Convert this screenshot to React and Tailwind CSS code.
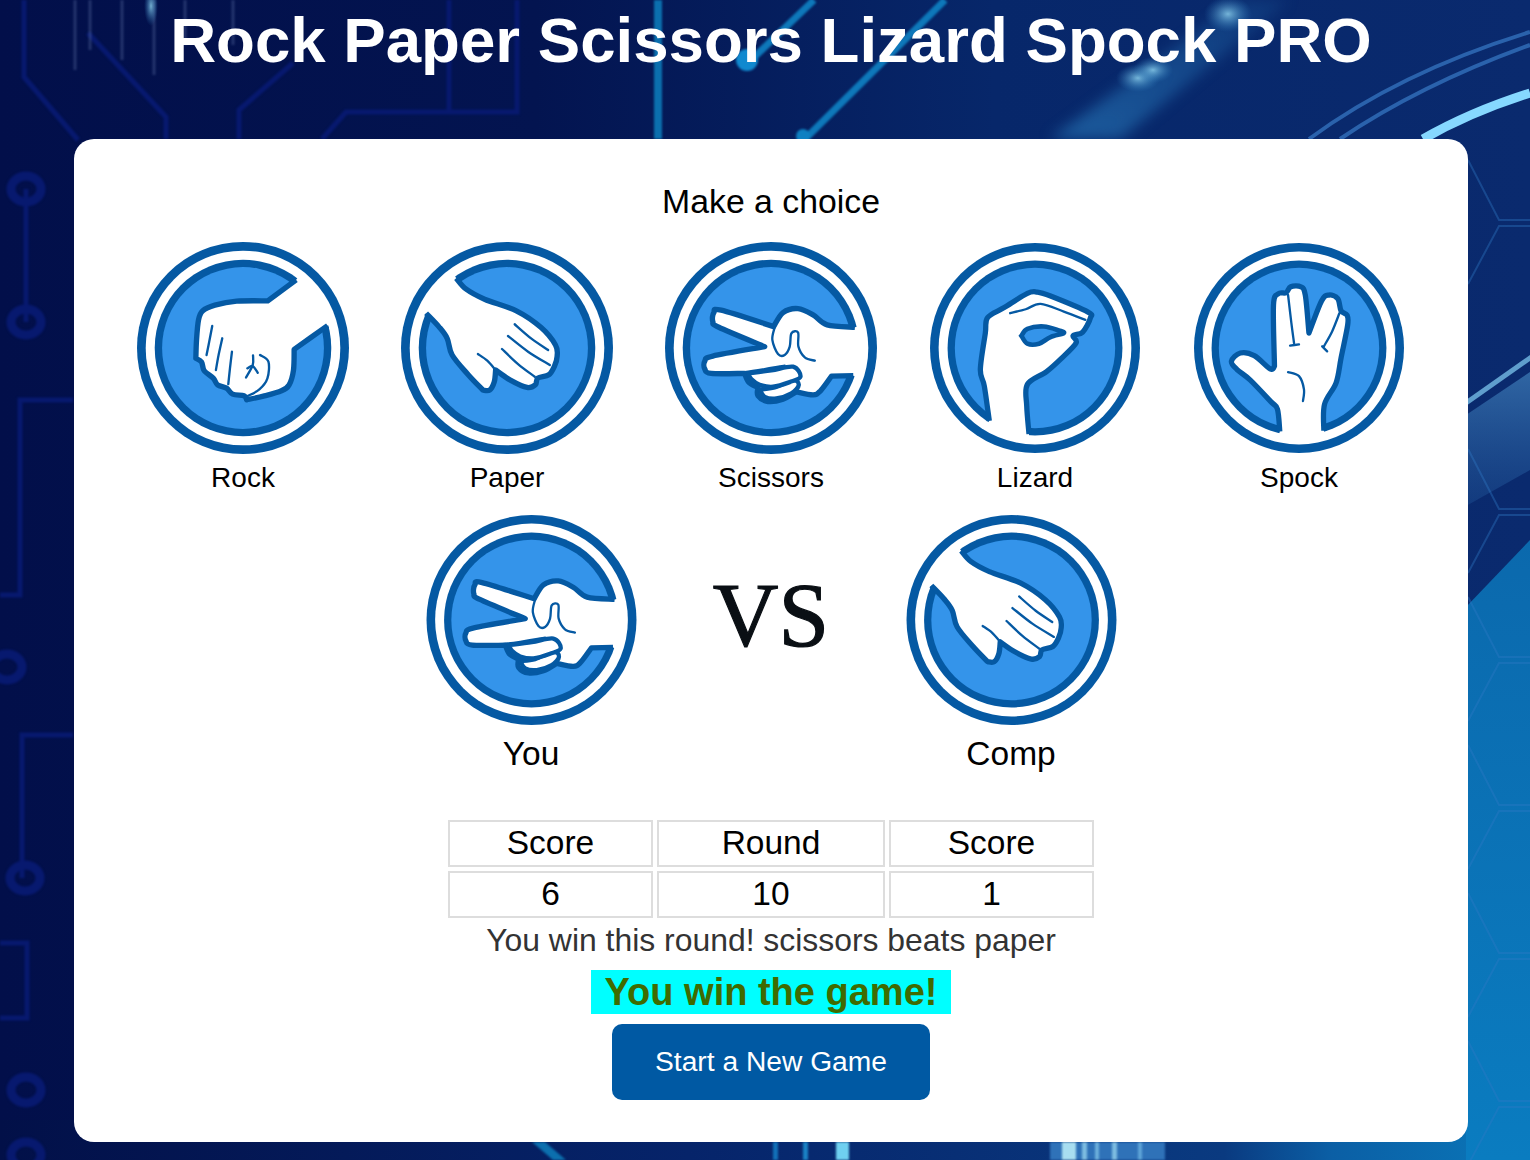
const DARK = "#0559a3";
const BLUE = "#3494ea";

// Catmull-Rom through each run of points; runs meet at sharp corners.
function spline(runs, close = false) {
  let d = "";
  runs.forEach((pts, r) => {
    if (r === 0) d += `M${pts[0][0]} ${pts[0][1]}`;
    for (let i = 0; i < pts.length - 1; i++) {
      const p0 = pts[i - 1] || pts[i];
      const p1 = pts[i];
      const p2 = pts[i + 1];
      const p3 = pts[i + 2] || p2;
      const c1x = p1[0] + (p2[0] - p0[0]) / 6;
      const c1y = p1[1] + (p2[1] - p0[1]) / 6;
      const c2x = p2[0] - (p3[0] - p1[0]) / 6;
      const c2y = p2[1] - (p3[1] - p1[1]) / 6;
      d += `C${c1x.toFixed(1)} ${c1y.toFixed(1)} ${c2x.toFixed(1)} ${c2y.toFixed(1)} ${p2[0]} ${p2[1]}`;
    }
  });
  return d + (close ? "Z" : "");
}

const HANDS = {
  rock: {
    c: [369, 354],
    sweep: 0,
    outline: [
      [[528, 150], [443, 213]],
      [[443, 213], [350, 214], [285, 226], [248, 243], [236, 270], [230, 330], [228, 385]],
      [[228, 385], [245, 396], [253, 422], [280, 444], [293, 464], [320, 474], [338, 492], [372, 497], [380, 509]],
      [[380, 509], [430, 498], [484, 482], [507, 464], [520, 420], [522, 358]],
      [[522, 358], [622, 287]],
    ],
    lines: [
      [[[277, 288], [268, 335], [260, 375]]],
      [[[307, 325], [296, 375], [288, 420]]],
      [[[336, 365], [330, 415], [325, 462]]],
      [[[399, 376], [398, 405], [378, 442]]],
      [[[382, 415], [398, 408], [413, 428]]],
      [[[420, 375], [445, 395], [442, 445], [418, 478], [382, 498]]],
    ],
  },
  paper: {
    c: [1162, 354],
    sweep: 1,
    outline: [
      [[1010, 145], [1040, 178], [1095, 208], [1190, 243], [1264, 293], [1307, 345], [1312, 378], [1304, 408], [1287, 434], [1254, 444], [1247, 464], [1222, 472], [1172, 450], [1128, 420]],
      [[1128, 420], [1124, 455], [1110, 480], [1090, 480]],
      [[1090, 480], [1046, 434], [998, 375], [983, 325], [958, 290], [920, 250]],
    ],
    lines: [
      [[[1075, 372], [1103, 392], [1128, 420]]],
      [[[1185, 283], [1235, 326], [1285, 360]]],
      [[[1165, 318], [1225, 365], [1290, 405]]],
      [[[1147, 357], [1195, 402], [1245, 440]]],
    ],
  },
  scissors: {
    c: [364, 354],
    sweep: 0,
    outline: [
      [[615, 292], [532, 285], [490, 255], [445, 236], [400, 248], [372, 290]],
      [[372, 290], [215, 241], [193, 248], [190, 275], [208, 292], [345, 350]],
      [[345, 350], [190, 378], [166, 393], [166, 417], [185, 430], [285, 430]],
      [[285, 430], [298, 457], [325, 472]],
      [[325, 472], [325, 497], [355, 514], [400, 507], [440, 485]],
      [[440, 485], [490, 494], [512, 482], [545, 438]],
      [[545, 438], [610, 437]],
    ],
    blobs: [
      [[[330, 478], [375, 472], [430, 450], [447, 465], [425, 490], [380, 505], [345, 500], [330, 478]]],
      [[[296, 430], [365, 421], [430, 410], [452, 440], [420, 456], [370, 470], [330, 464], [305, 447], [296, 430]]],
    ],
    lines: [
      [[[185, 430], [285, 426], [405, 407]]],
      [[[375, 292], [368, 330], [385, 372], [405, 375], [420, 350], [425, 310], [445, 308], [446, 350], [465, 382], [495, 392]]],
    ],
  },
  lizard: {
    c: [1153, 355],
    sweep: 1,
    small: true,
    outline: [
      [[1015, 575], [1000, 470], [988, 420], [1003, 310], [1010, 263], [1060, 233], [1130, 190], [1160, 186], [1200, 198], [1312, 246], [1320, 265], [1297, 307], [1268, 318], [1277, 340], [1232, 387], [1187, 427], [1130, 465], [1128, 530], [1135, 615]],
    ],
    lines: [[[[1078, 250], [1125, 238], [1170, 222], [1240, 245], [1305, 270]]]],
    hole: [[[1112, 318], [1130, 297], [1180, 290], [1225, 302], [1240, 310], [1200, 322], [1165, 342], [1130, 342], [1112, 318]]],
  },
  spock: {
    c: [355, 355],
    sweep: 1,
    small: true,
    outline: [
      [[297, 607], [290, 540], [270, 517], [208, 452], [168, 420], [151, 395], [178, 370], [220, 378], [268, 418], [281, 410]],
      [[281, 410], [278, 225], [293, 191], [316, 188], [330, 170], [360, 170], [374, 195], [385, 310]],
      [[385, 310], [423, 213], [445, 195], [472, 206], [482, 243], [500, 256], [502, 285], [482, 385], [467, 460], [432, 525], [430, 605]],
    ],
    lines: [
      [[[322, 195], [332, 280], [340, 340]]],
      [[[477, 250], [455, 305], [430, 350]]],
      [[[328, 348], [355, 344]]],
      [[[425, 350], [440, 365]]],
      [[[322, 428], [355, 440], [370, 480], [367, 515]]],
    ],
  },
};

function Hand({ name, className }) {
  const h = HANDS[name];
  const [cx, cy] = h.c;
  const outline = spline(h.outline);
  const first = h.outline[0][0];
  const lastRun = h.outline[h.outline.length - 1];
  const last = lastRun[lastRun.length - 1];
  const ext = ([x, y]) => {
    const dx = x - cx;
    const dy = y - cy;
    const k = 278 / Math.hypot(dx, dy);
    return `${(cx + dx * k).toFixed(1)} ${(cy + dy * k).toFixed(1)}`;
  };
  const close = `L${ext(last)}A278 278 0 0 ${h.sweep} ${ext(first)}Z`;
  return (
    <svg viewBox={`${cx - 317} ${cy - 317} 634 634`} className={className}>
      <circle cx={cx} cy={cy} r="317" fill={DARK} />
      <circle cx={cx} cy={cy} r="291" fill="#fff" />
      <circle cx={cx} cy={cy} r="264" fill={DARK} />
      <circle cx={cx} cy={cy} r="242" fill={BLUE} />
      <path d={outline + close} fill="#fff" />
      <path d={outline} fill="none" stroke={DARK} strokeWidth="16" strokeLinejoin="round" strokeLinecap="butt" />
      {h.hole && <path d={spline(h.hole, true)} fill={BLUE} stroke={DARK} strokeWidth="14" />}
      {h.lines.map((l, i) => (
        <path key={i} d={spline(l)} fill="none" stroke={DARK} strokeWidth="7" strokeLinecap="round" />
      ))}
      {h.blobs &&
        h.blobs.map((b, i) => (
          <path key={i} d={spline(b, true)} fill="#fff" stroke={DARK} strokeWidth="13" strokeLinejoin="round" />
        ))}
    </svg>
  );
}

function Backdrop() {
  const ringsL = [[26, 189], [26, 322], [7, 667], [25, 878], [26, 1090], [26, 1155]];
  const hexY = [222, 511, 659, 807, 955, 1103];
  return (
    <svg viewBox="0 0 1530 1160" className="absolute inset-0 h-[1160px] w-[1530px]">
      <defs>
        <linearGradient id="base" x1="0" x2="1" y1="0" y2="0">
          <stop offset="0" stopColor="#020f4a" />
          <stop offset="0.35" stopColor="#031450" />
          <stop offset="0.65" stopColor="#07276a" />
          <stop offset="1" stopColor="#0a2a6e" />
        </linearGradient>
        <linearGradient id="low" x1="0" x2="0" y1="0" y2="1">
          <stop offset="0" stopColor="#0b69ad" />
          <stop offset="1" stopColor="#0a7cc0" />
        </linearGradient>
        <linearGradient id="bottom" x1="0" x2="1" y1="0" y2="0">
          <stop offset="0" stopColor="#021048" />
          <stop offset="0.45" stopColor="#06246a" />
          <stop offset="0.8" stopColor="#0a3a80" />
          <stop offset="0.87" stopColor="#0b5fa5" />
          <stop offset="1" stopColor="#0a78ba" />
        </linearGradient>
        <radialGradient id="glow">
          <stop offset="0" stopColor="#8fd4f0" stopOpacity="0.8" />
          <stop offset="1" stopColor="#2f80c0" stopOpacity="0" />
        </radialGradient>
        <linearGradient id="sweep" x1="0" x2="1" y1="1" y2="0">
          <stop offset="0" stopColor="#2a7fc0" stopOpacity="0.6" />
          <stop offset="1" stopColor="#2a7fc0" stopOpacity="0.15" />
        </linearGradient>
        <linearGradient id="band" x1="0" x2="0" y1="0" y2="1">
          <stop offset="0" stopColor="#4f97cf" stopOpacity="0.55" />
          <stop offset="1" stopColor="#2c6cb0" stopOpacity="0.25" />
        </linearGradient>
      </defs>
      <rect width="1530" height="1160" fill="url(#base)" />
      <rect y="1120" width="1530" height="40" fill="url(#bottom)" />
      <polygon points="1466,607 1530,540 1530,1160 1466,1160" fill="url(#low)" />
      <polygon points="1466,415 1530,372 1530,470 1466,506" fill="url(#band)" />
      <polygon points="1466,400 1530,355 1530,361 1466,406" fill="#7cc6ee" fillOpacity="0.75" />

      {/* left circuit traces */}
      <g fill="none" stroke="#07196f" strokeWidth="5" className="blur-[1px]">
        <polyline points="24,0 24,77 78,140" />
        <polyline points="88,33 166,117 166,139" />
        <polyline points="293,63 239,110 239,139" />
        <polyline points="322,139 346,112 517,112 517,0" />
        <polyline points="449,0 449,112" />
        <polyline points="26,189 26,322" />
        <polyline points="73,400 20,400 20,595 0,595" />
        <polyline points="73,735 22,735 22,878" />
        <polyline points="0,943 27,943 27,1018 0,1018" />
        {ringsL.map(([x, y]) => (
          <ellipse key={`${x}-${y}`} cx={x} cy={y} rx="15" ry="13" strokeWidth="9" />
        ))}
      </g>
      {/* left streaks */}
      <g stroke="#7c93c4" strokeOpacity="0.28" strokeWidth="3" className="blur-[1px]">
        <line x1="75" x2="75" y1="0" y2="70" />
        <line x1="90" x2="90" y1="0" y2="50" />
        <line x1="122" x2="122" y1="0" y2="60" />
        <line x1="154" x2="154" y1="0" y2="75" />
        <line x1="185" x2="185" y1="0" y2="45" />
        <line x1="233" x2="233" y1="0" y2="45" />
      </g>
      <ellipse cx="151" cy="6" rx="7" ry="20" fill="url(#glow)" />

      {/* centre blue lines */}
      <g className="blur-[0.8px]">
        <rect x="654" y="0" width="8" height="139" fill="#0b6fae" />
        <g stroke="#0e78ba" strokeWidth="7" fill="none">
          <line x1="814" y1="0" x2="745" y2="66" />
          <line x1="945" y1="0" x2="805" y2="139" />
        </g>
        <circle cx="747" cy="60" r="11" fill="#1089cf" />
        <circle cx="803" cy="136" r="7" fill="#0e80c2" />
      </g>

      {/* glowing sweep */}
      <polygon points="1050,139 1120,139 1290,0 1240,0" fill="url(#sweep)" className="blur-[7px]" />
      <ellipse cx="1138" cy="78" rx="22" ry="14" fill="url(#glow)" />
      <ellipse cx="1153" cy="70" rx="20" ry="13" fill="url(#glow)" />
      <ellipse cx="1228" cy="14" rx="24" ry="18" fill="url(#glow)" />

      {/* arcs */}
      <g fill="none">
        <path d="M1309 139Q1400 72 1530 32" stroke="#2a62ac" strokeWidth="4" />
        <path d="M1340 139Q1420 85 1530 45" stroke="#2a62ac" strokeWidth="4" />
        <path d="M1423 139Q1470 112 1530 93" stroke="#86d8ff" strokeWidth="9" />
      </g>

      {/* hexagon mesh */}
      <g fill="none" stroke="#2f78c4" strokeOpacity="0.38" strokeWidth="2" className="blur-[0.5px]">
        {hexY.map((y) => (
          <g key={y}>
            <polyline points={`1468,${y - 62} 1499,${y - 2} 1530,${y - 2}`} />
            <polyline points={`1468,${y + 62} 1499,${y + 4} 1530,${y + 4}`} />
          </g>
        ))}
      </g>

      {/* bottom streaks */}
      <g className="blur-[1px]">
        <polygon points="532,1142 545,1142 566,1160 553,1160" fill="#0c6fae" />
        <rect x="773" y="1142" width="5" height="18" fill="#1270b8" />
        <rect x="803" y="1142" width="5" height="18" fill="#1a82c4" />
        <rect x="836" y="1142" width="13" height="18" fill="#6fd0f0" />
        <rect x="1050" y="1142" width="115" height="18" fill="#2f72b8" />
        <rect x="1062" y="1142" width="14" height="18" fill="#a8def0" />
        <rect x="1082" y="1142" width="5" height="18" fill="#7dbce0" />
        <rect x="1095" y="1142" width="4" height="18" fill="#6cb0dc" />
        <rect x="1112" y="1142" width="5" height="18" fill="#7dbce0" />
        <rect x="1138" y="1142" width="4" height="18" fill="#5ea4d8" />
      </g>
    </svg>
  );
}

const CHOICES = [
  ["rock", "Rock"],
  ["paper", "Paper"],
  ["scissors", "Scissors"],
  ["lizard", "Lizard"],
  ["spock", "Spock"],
];

const cell = "flex h-[47px] items-center justify-center border-2 border-[#dddddd] text-[33.5px] text-black";

export default function App() {
  return (
    <div className="relative h-[1160px] w-full overflow-hidden font-['Liberation_Sans',Arial,sans-serif]">
      <Backdrop />
      <div className="relative ml-[74px] w-[1394px]">
        <h1 className="h-[80px] text-center text-[63.6px] leading-[80px] font-bold text-white">
          Rock Paper Scissors Lizard Spock PRO
        </h1>
        <main className="mt-[59px] flex flex-col items-center rounded-[20px] bg-white pt-[42px] pb-[42px]">
          <p className="text-[33.8px] leading-[40px] text-black">Make a choice</p>

          <div className="mt-[21px] grid w-[1320px] grid-cols-5">
            {CHOICES.map(([key, label]) => (
              <button key={key} className="flex flex-col items-center">
                <span className="flex h-[212px] items-center justify-center">
                  <Hand name={key} className={HANDS[key].small ? "h-[210px] w-[210px]" : "h-[212px] w-[212px]"} />
                </span>
                <span className="mt-[8px] text-[28px] leading-[32px] text-black">{label}</span>
              </button>
            ))}
          </div>

          <div className="mt-[21px] grid w-[720px] grid-cols-3">
            <div className="flex flex-col items-center">
              <Hand name="scissors" className="h-[210px] w-[211px]" />
              <span className="mt-[9px] text-[33.5px] leading-[40px] text-black">You</span>
            </div>
            <div className="flex h-[210px] items-center justify-center pb-[10px]">
              <span className="font-['Liberation_Serif',serif] text-[91px] leading-none text-[#0a0f14] blur-[0.6px] [-webkit-text-stroke:1.2px_#0a0f14]">VS</span>
            </div>
            <div className="flex flex-col items-center">
              <Hand name="paper" className="h-[210px] w-[211px]" />
              <span className="mt-[9px] text-[33.5px] leading-[40px] text-black">Comp</span>
            </div>
          </div>

          <div className="mt-[46px] grid grid-cols-[205px_228px_205px] gap-[4px]">
            <div className={cell}>Score</div>
            <div className={cell}>Round</div>
            <div className={cell}>Score</div>
            <div className={cell}>6</div>
            <div className={cell}>10</div>
            <div className={cell}>1</div>
          </div>

          <p className="mt-[2px] text-[31.9px] leading-[40px] text-[#333333]">You win this round! scissors beats paper</p>

          <p className="mt-[10px] flex h-[44px] w-[360px] items-center justify-center bg-[#00ffff] text-[38px] font-bold text-[#3f6b00]">
            You win the game!
          </p>

          <button className="mt-[10px] h-[76px] w-[318px] rounded-[10px] bg-[#0059a3] pb-[2px] text-[28.2px] text-white">
            Start a New Game
          </button>
        </main>
      </div>
    </div>
  );
}
